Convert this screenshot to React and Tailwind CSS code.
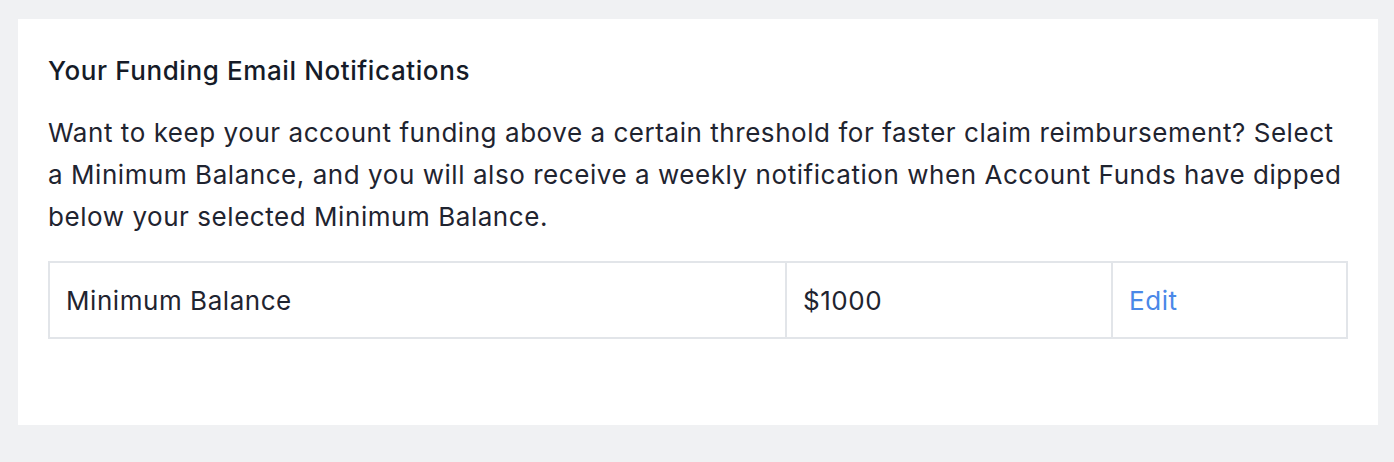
import React from 'react';

const rows = [{ label: 'Minimum Balance', value: '$1000' }];

const App = () => {
    return (
        <div className="min-h-[462px] w-full bg-[#f0f1f3] pt-[19px] pl-[18px] pr-[16px] pb-[37px]" style={{ fontFamily: 'Inter, "Noto Sans", sans-serif' }}>
            <div className="bg-white pt-[36px] px-[30px] pb-[86px] min-h-[406px]">
                <h2 className="text-[26px] leading-[32px] font-medium tracking-[0.6px] text-[#151b28]">Your Funding Email Notifications</h2>
                <p className="mt-[25px] text-[26px] leading-[42px] tracking-[0.55px] text-[#1f2430]">
                    Want to keep your account funding above a certain threshold for faster claim reimbursement? Select a Minimum Balance, and you will also receive a weekly notification when Account Funds have dipped below your selected Minimum Balance.
                </p>
                <table className="mt-[23px] w-full border-collapse text-[26px] tracking-[0.55px] text-[#1f2430]">
                    <tbody>
                        {rows.map((row) => (
                            <tr key={row.label} className="h-[76px]">
                                <td className="w-[737px] border-2 border-[#e2e5e9] px-[16px]">{row.label}</td>
                                <td className="w-[326px] border-2 border-[#e2e5e9] px-[16px]">{row.value}</td>
                                <td className="border-2 border-[#e2e5e9] px-[16px]">
                                    <a href="#" className="text-[#4a88e8]">Edit</a>
                                </td>
                            </tr>
                        ))}
                    </tbody>
                </table>
            </div>
        </div>
    );
};

export default App;
